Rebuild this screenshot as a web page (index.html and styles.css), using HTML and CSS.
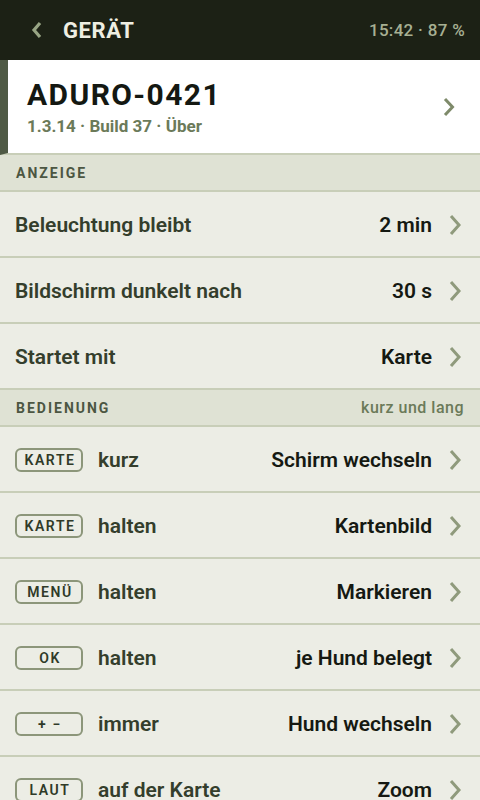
FILE: index.html
```html
<!DOCTYPE html>
<html lang="de">
<head>
<meta charset="utf-8">
<link rel="stylesheet" href="styles.css">
</head>
<body>
<header class="topbar">
  <div class="topbar-left">
    <svg class="back" width="14" height="20" viewBox="0 0 14 20"><path d="M10 3 L4 10 L10 17" fill="none" stroke="#98a584" stroke-width="3.2"/></svg>
    <span class="title">GERÄT</span>
  </div>
  <span class="status">15:42 · 87 %</span>
</header>
<section class="device">
  <div class="device-info">
    <div class="device-name">ADURO-0421</div>
    <div class="device-sub">1.3.14 · Build 37 · Über</div>
  </div>
  <svg class="chev-card" width="13" height="20" viewBox="0 0 13 20"><path d="M2 2 L9.5 10 L2 18" fill="none" stroke="#7e8a6a" stroke-width="3"/></svg>
</section>
<div class="section-head"><span>ANZEIGE</span></div>
<div class="row"><span class="label">Beleuchtung bleibt</span><span class="value">2 min</span><svg class="chev" width="13" height="22" viewBox="0 0 13 22"><path d="M2 2 L10 11 L2 20" fill="none" stroke="#8f9a7c" stroke-width="3"/></svg></div>
<div class="row"><span class="label">Bildschirm dunkelt nach</span><span class="value">30 s</span><svg class="chev" width="13" height="22" viewBox="0 0 13 22"><path d="M2 2 L10 11 L2 20" fill="none" stroke="#8f9a7c" stroke-width="3"/></svg></div>
<div class="row"><span class="label">Startet mit</span><span class="value">Karte</span><svg class="chev" width="13" height="22" viewBox="0 0 13 22"><path d="M2 2 L10 11 L2 20" fill="none" stroke="#8f9a7c" stroke-width="3"/></svg></div>
<div class="section-head short"><span>BEDIENUNG</span><span class="hint">kurz und lang</span></div>
<div class="row"><span class="key">KARTE</span><span class="label">kurz</span><span class="value">Schirm wechseln</span><svg class="chev" width="13" height="22" viewBox="0 0 13 22"><path d="M2 2 L10 11 L2 20" fill="none" stroke="#8f9a7c" stroke-width="3"/></svg></div>
<div class="row"><span class="key">KARTE</span><span class="label">halten</span><span class="value">Kartenbild</span><svg class="chev" width="13" height="22" viewBox="0 0 13 22"><path d="M2 2 L10 11 L2 20" fill="none" stroke="#8f9a7c" stroke-width="3"/></svg></div>
<div class="row"><span class="key">MENÜ</span><span class="label">halten</span><span class="value">Markieren</span><svg class="chev" width="13" height="22" viewBox="0 0 13 22"><path d="M2 2 L10 11 L2 20" fill="none" stroke="#8f9a7c" stroke-width="3"/></svg></div>
<div class="row"><span class="key">OK</span><span class="label">halten</span><span class="value">je Hund belegt</span><svg class="chev" width="13" height="22" viewBox="0 0 13 22"><path d="M2 2 L10 11 L2 20" fill="none" stroke="#8f9a7c" stroke-width="3"/></svg></div>
<div class="row"><span class="key">+ −</span><span class="label">immer</span><span class="value">Hund wechseln</span><svg class="chev" width="13" height="22" viewBox="0 0 13 22"><path d="M2 2 L10 11 L2 20" fill="none" stroke="#8f9a7c" stroke-width="3"/></svg></div>
<div class="row"><span class="key">LAUT</span><span class="label">auf der Karte</span><span class="value">Zoom</span><svg class="chev" width="13" height="22" viewBox="0 0 13 22"><path d="M2 2 L10 11 L2 20" fill="none" stroke="#8f9a7c" stroke-width="3"/></svg></div>
</body>
</html>
```
FILE: styles.css
```css
* { box-sizing: border-box; }
html, body { margin: 0; padding: 0; }
body {
  width: 480px;
  height: 800px;
  overflow: hidden;
  background: #ecede5;
  font-family: Roboto, "Liberation Sans", sans-serif;
}
.topbar {
  height: 60px;
  background: #1c2115;
  display: flex;
  align-items: center;
  justify-content: space-between;
  padding: 0 15px 0 30px;
}
.topbar-left { display: flex; align-items: center; gap: 19px; }
.back { display: block; }
.title {
  color: #eeeee2;
  font-size: 22px;
  font-weight: 700;
  letter-spacing: 0.6px;
}
.status {
  color: #a7b093;
  font-size: 17px;
  font-weight: 500;
  letter-spacing: 0.3px;
}
.device {
  height: 95px;
  background: #ffffff;
  border-left: 8px solid #4f5a45;
  border-bottom: 2px solid #c8ceb8;
  display: flex;
  align-items: center;
  justify-content: space-between;
  padding: 0 24px 0 19px;
}
.device-info { display: flex; flex-direction: column; }
.device-name {
  font-size: 30px;
  font-weight: 700;
  color: #141812;
  letter-spacing: 1.4px;
  line-height: 34px;
  margin-top: 0;
}
.device-sub {
  font-size: 17px;
  font-weight: 700;
  color: #6b7a59;
  line-height: 20px;
  margin-top: 4px;
}
.section-head {
  height: 37px;
  background: #dfe2d4;
  border-bottom: 2px solid #c8ceb8;
  display: flex;
  align-items: center;
  justify-content: space-between;
  padding: 0 16px;
  font-size: 14px;
  font-weight: 700;
  letter-spacing: 2px;
  color: #4c5642;
}
.section-head .hint {
  letter-spacing: 0.5px;
  font-weight: 500;
  font-size: 16px;
  color: #6b7a59;
}
.row {
  height: 66px;
  border-bottom: 2px solid #c8ceb8;
  display: flex;
  align-items: center;
  padding: 1px 18px 0 15px;
}
.row .label {
  font-size: 21px;
  font-weight: 600;
  color: #343e2c;
  flex: 1;
}
.row .value {
  font-size: 21px;
  font-weight: 600;
  color: #151912;
  margin-right: 17px;
}
.key {
  width: 68px;
  height: 24px;
  border: 2px solid #8c967a;
  border-radius: 6px;
  display: flex;
  align-items: center;
  justify-content: center;
  font-size: 14px;
  font-weight: 600;
  letter-spacing: 1.6px;
  color: #2f3a28;
  margin-right: 15px;
  padding-left: 2px;
  flex-shrink: 0;
}
.chev, .chev-card { display: block; flex-shrink: 0; }
```
